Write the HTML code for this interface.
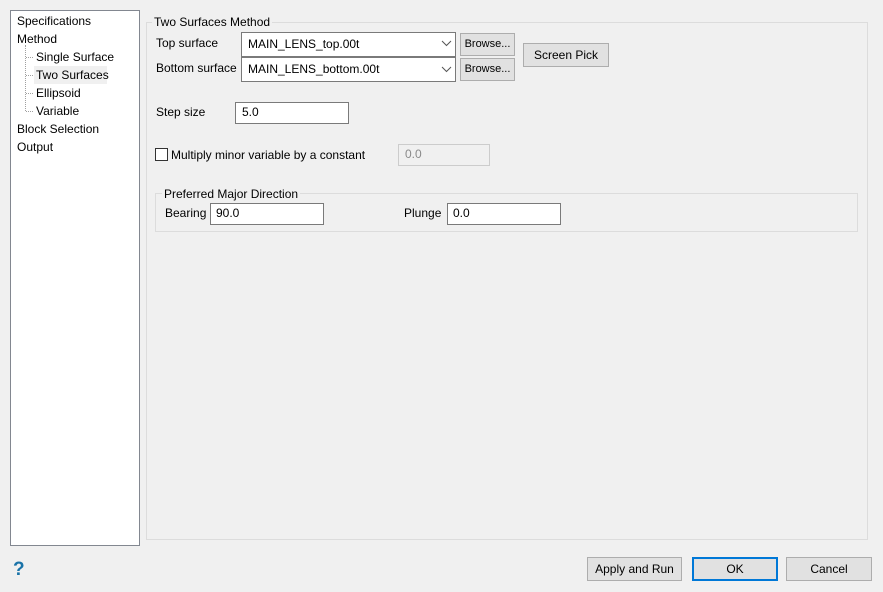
<!DOCTYPE html>
<html><head><meta charset="utf-8"><style>
*{box-sizing:border-box;margin:0;padding:0}
body{width:883px;height:592px;background:#f0f0f0;font-family:"Liberation Sans",sans-serif;font-size:12px;color:#000;position:relative;overflow:hidden}
.a{position:absolute;white-space:nowrap}
.t{position:absolute;white-space:nowrap;line-height:14px}
.in{position:absolute;background:#fff;border:1px solid #7a7a7a;padding-left:6px;line-height:19px}
.btn{position:absolute;background:#e1e1e1;border:1px solid #adadad;text-align:center}
.grp{position:absolute;border:1px solid #dcdcdc}
.gt{position:absolute;background:#f0f0f0;padding:0 2px;line-height:14px;white-space:nowrap}
.dv{position:absolute;border-left:1px dotted #a0a0a0}
.dh{position:absolute;border-top:1px dotted #a0a0a0;height:0}
</style></head><body>
<div class="a" style="left:10px;top:10px;width:130px;height:536px;background:#fff;border:1px solid #828790"></div>
<div class="t" style="left:17px;top:14px">Specifications</div>
<div class="t" style="left:17px;top:32px">Method</div>
<div class="dv" style="left:25px;top:45px;height:66px"></div>
<div class="dh" style="left:26px;top:57px;width:7px"></div>
<div class="dh" style="left:26px;top:75px;width:7px"></div>
<div class="dh" style="left:26px;top:93px;width:7px"></div>
<div class="dh" style="left:26px;top:111px;width:7px"></div>
<div class="a" style="left:34px;top:66px;width:73px;height:18px;background:#f0f0f0"></div>
<div class="t" style="left:36px;top:50px">Single Surface</div>
<div class="t" style="left:36px;top:68px">Two Surfaces</div>
<div class="t" style="left:36px;top:86px">Ellipsoid</div>
<div class="t" style="left:36px;top:104px">Variable</div>
<div class="t" style="left:17px;top:122px">Block Selection</div>
<div class="t" style="left:17px;top:140px">Output</div>

<div class="grp" style="left:146px;top:22px;width:722px;height:518px"></div>
<div class="gt" style="left:152px;top:15px">Two Surfaces Method</div>

<div class="t" style="left:156px;top:36px">Top surface</div>
<div class="in" style="left:241px;top:32px;width:215px;height:25px;line-height:22px">MAIN_LENS_top.00t</div>
<svg class="a" style="left:441px;top:40px" width="11" height="7"><path d="M1 1l4.5 4.5L10 1" fill="none" stroke="#555" stroke-width="1"/></svg>
<div class="t" style="left:156px;top:61px">Bottom surface</div>
<div class="in" style="left:241px;top:57px;width:215px;height:25px;line-height:22px">MAIN_LENS_bottom.00t</div>
<svg class="a" style="left:441px;top:66px" width="11" height="7"><path d="M1 1l4.5 4.5L10 1" fill="none" stroke="#555" stroke-width="1"/></svg>
<div class="btn" style="left:460px;top:33px;width:55px;height:23px;line-height:21px;font-size:11px">Browse...</div>
<div class="btn" style="left:460px;top:58px;width:55px;height:23px;line-height:21px;font-size:11px">Browse...</div>
<div class="btn" style="left:523px;top:43px;width:86px;height:24px;line-height:22px">Screen Pick</div>

<div class="t" style="left:156px;top:105px">Step size</div>
<div class="in" style="left:235px;top:102px;width:114px;height:22px">5.0</div>

<div class="a" style="left:155px;top:148px;width:13px;height:13px;border:1px solid #333;background:#fff"></div>
<div class="t" style="left:171px;top:148px">Multiply minor variable by a constant</div>
<div class="in" style="left:398px;top:144px;width:92px;height:22px;background:#f0f0f0;border-color:#ccc;color:#8a8a8a">0.0</div>

<div class="grp" style="left:155px;top:193px;width:703px;height:39px"></div>
<div class="gt" style="left:162px;top:187px">Preferred Major Direction</div>
<div class="t" style="left:165px;top:206px">Bearing</div>
<div class="in" style="left:210px;top:203px;width:114px;height:22px;padding-left:5px">90.0</div>
<div class="t" style="left:404px;top:206px">Plunge</div>
<div class="in" style="left:447px;top:203px;width:114px;height:22px;padding-left:5px">0.0</div>

<div class="a" style="left:13px;top:560px;font-size:19px;font-weight:bold;color:#1a73a8;line-height:20px">?</div>
<div class="btn" style="left:587px;top:557px;width:95px;height:24px;line-height:22px">Apply and Run</div>
<div class="btn" style="left:692px;top:557px;width:86px;height:24px;line-height:20px;border:2px solid #0078d7">OK</div>
<div class="btn" style="left:786px;top:557px;width:86px;height:24px;line-height:22px">Cancel</div>
</body></html>
